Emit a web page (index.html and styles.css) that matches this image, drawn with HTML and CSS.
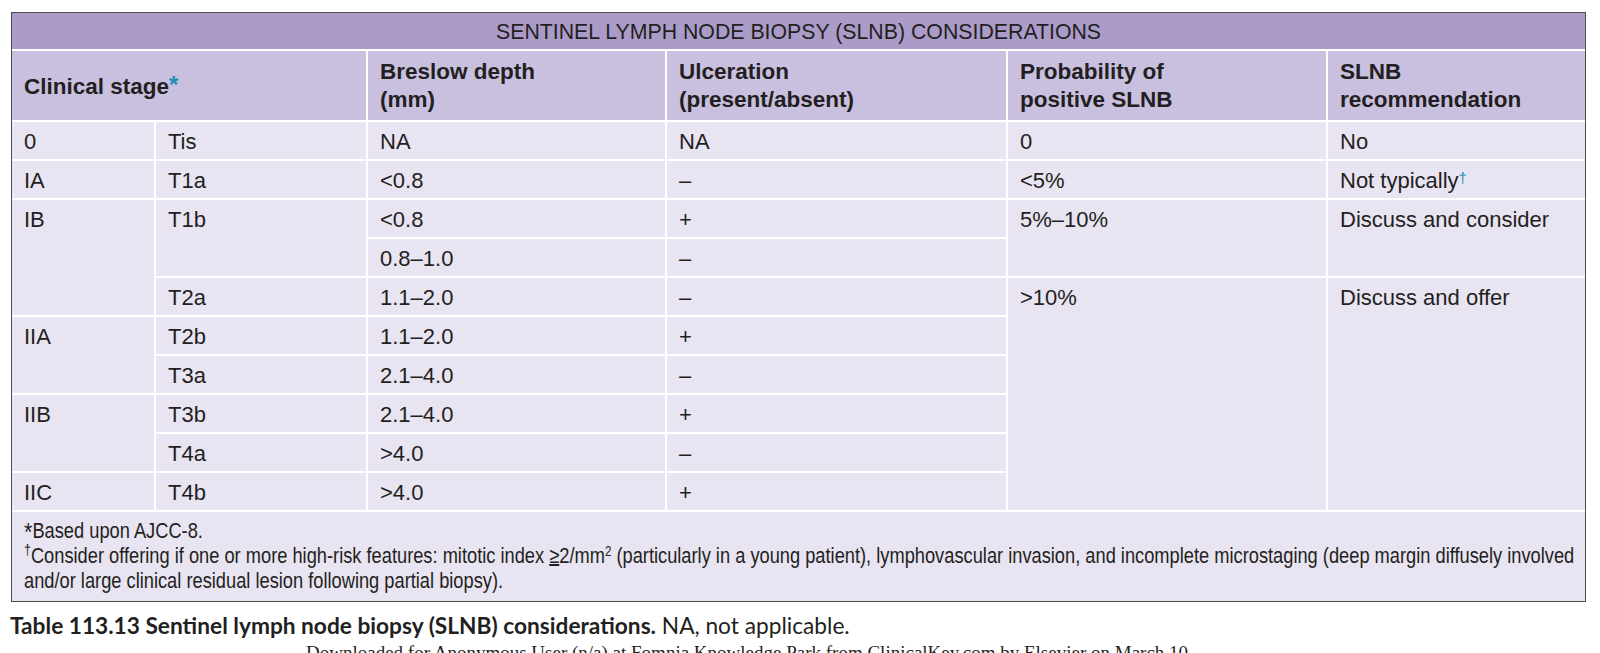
FILE: index.html
```html
<!DOCTYPE html>
<html lang="en">
<head>
<meta charset="utf-8">
<title>Table 113.13 Sentinel lymph node biopsy (SLNB) considerations</title>
<link rel="stylesheet" href="styles.css">
</head>
<body>
<div class="frame">
  <table class="slnb">
    <colgroup>
      <col class="c1"><col class="c2"><col class="c3"><col class="c4"><col class="c5"><col class="c6">
    </colgroup>
    <thead>
      <tr class="title-row"><th colspan="6">SENTINEL LYMPH NODE BIOPSY (SLNB) CONSIDERATIONS</th></tr>
      <tr class="head-row">
        <th colspan="2" class="mid">Clinical stage<span class="mark">*</span></th>
        <th>Breslow depth<br>(mm)</th>
        <th>Ulceration<br>(present/absent)</th>
        <th>Probability of<br>positive SLNB</th>
        <th>SLNB<br>recommendation</th>
      </tr>
    </thead>
    <tbody>
      <tr><td>0</td><td>Tis</td><td>NA</td><td>NA</td><td>0</td><td>No</td></tr>
      <tr><td>IA</td><td>T1a</td><td>&lt;0.8</td><td>–</td><td>&lt;5%</td><td>Not typically<sup class="mark">†</sup></td></tr>
      <tr><td rowspan="3">IB</td><td rowspan="2">T1b</td><td>&lt;0.8</td><td>+</td><td rowspan="2">5%–10%</td><td rowspan="2">Discuss and consider</td></tr>
      <tr><td>0.8–1.0</td><td>–</td></tr>
      <tr><td>T2a</td><td>1.1–2.0</td><td>–</td><td rowspan="7">&gt;10%</td><td rowspan="7">Discuss and offer</td></tr>
      <tr><td rowspan="2">IIA</td><td>T2b</td><td>1.1–2.0</td><td>+</td></tr>
      <tr><td>T3a</td><td>2.1–4.0</td><td>–</td></tr>
      <tr><td rowspan="2">IIB</td><td>T3b</td><td>2.1–4.0</td><td>+</td></tr>
      <tr><td>T4a</td><td>&gt;4.0</td><td>–</td></tr>
      <tr><td>IIC</td><td>T4b</td><td>&gt;4.0</td><td>+</td></tr>
    </tbody>
    <tfoot>
      <tr><td colspan="6" class="notes">
        <div class="notes-text">
          <p><span class="fmark">*</span>Based upon AJCC-8.</p>
          <p><sup class="dag">†</sup>Consider offering if one or more high-risk features: mitotic index <span class="ge">≥</span>2/mm<sup class="sq">2</sup> (particularly in a young patient), lymphovascular invasion, and incomplete microstaging (deep margin diffusely involved and/or large clinical residual lesion following partial biopsy).</p>
        </div>
      </td></tr>
    </tfoot>
  </table>
</div>
<p class="caption"><b>Table 113.13 Sentinel lymph node biopsy (SLNB) considerations.</b> NA, not applicable.</p>
<p class="download">Downloaded for Anonymous User (n/a) at Fomnia Knowledge Park from ClinicalKey.com by Elsevier on March 10</p>
</body>
</html>
```

FILE: styles.css
```css
html, body {
  margin: 0;
  padding: 0;
  background: #ffffff;
}

body {
  height: 653px;
  overflow: hidden;
  font-family: "Liberation Sans", Arial, sans-serif;
  color: #231f20;
}

.frame {
  margin: 12px 0 0 11px;
  width: 1573px;
  border: 1.5px solid #4d4d4f;
}

.slnb {
  width: 1573px;
  table-layout: fixed;
  border-collapse: collapse;
  border-style: hidden;
}

.c1 { width: 143px; }
.c2 { width: 212px; }
.c3 { width: 299px; }
.c4 { width: 341px; }
.c5 { width: 320px; }
.c6 { width: 258px; }

.slnb th,
.slnb td {
  border: 2px solid #ffffff;
  text-align: left;
  vertical-align: top;
  font-family: "Liberation Sans", Arial, sans-serif;
}

.title-row th {
  background: #ab9bc9;
  text-align: center;
  font-weight: normal;
  font-size: 21.3px;
  line-height: 24px;
  padding: 7px 0 5px;
  color: #231f20;
}

.head-row th {
  background: #c9c0e0;
  font-weight: bold;
  font-size: 22.5px;
  line-height: 28px;
  padding: 7px 12px 6px;
  color: #231f20;
}

.head-row th.mid {
  vertical-align: middle;
}

.mark {
  color: #1c8fb8;
}

.head-row .mark {
  font-size: 24px;
  font-weight: bold;
  position: relative;
  top: -1px;
}

sup.mark {
  font-size: 15px;
  vertical-align: top;
  position: relative;
  top: -3px;
}

.slnb tbody td {
  background: #e8e4f2;
  font-size: 22px;
  line-height: 23px;
  padding: 8px 12px 6px;
  height: 23px;
}

.notes {
  background: #e8e4f2;
  padding: 6px 12px 8px;
  overflow: hidden;
}

.notes-text {
  width: 1890px;
  margin-right: -400px;
  transform: scaleX(0.83);
  transform-origin: 0 0;
  font-family: "Liberation Sans", Arial, sans-serif;
  font-size: 22px;
  line-height: 25px;
  color: #231f20;
}

.notes-text p {
  margin: 0;
}

.fmark {
  font-size: 26px;
  line-height: 0;
  position: relative;
  top: 3px;
}

.dag {
  font-size: 15px;
  line-height: 0;
  vertical-align: top;
  position: relative;
  top: 7px;
}

.sq {
  font-size: 14px;
  line-height: 0;
  vertical-align: top;
  position: relative;
  top: 8px;
}

.ge {
  text-decoration: underline;
  text-underline-offset: 1px;
}

.caption {
  margin: 11px 0 0 10px;
  font-family: "Lato", "Open Sans", sans-serif;
  font-size: 22.7px;
  line-height: 26px;
  color: #231f20;
}

.caption b {
  font-weight: bold;
}

.download {
  margin: 3px 0 0 306px;
  font-family: "Liberation Serif", "Times New Roman", serif;
  font-size: 19px;
  line-height: 22px;
  color: #231f20;
}
```
